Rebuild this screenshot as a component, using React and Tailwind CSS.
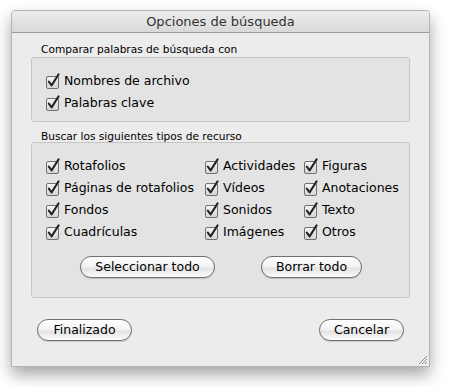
import React from "react";

function Check() {
  return (
    <svg width="15" height="16" viewBox="0 0 15 16" className="shrink-0">
      <defs>
        <linearGradient id="cbg" x1="0" y1="0" x2="0" y2="1">
          <stop offset="0" stopColor="#f6f6f6" />
          <stop offset="1" stopColor="#d4d4d4" />
        </linearGradient>
      </defs>
      <rect x="0.5" y="3.5" width="12" height="12" rx="1.5" fill="url(#cbg)" stroke="#6f6f6f" />
      <path d="M2.8 8.6 L5.6 12.4 L12.6 1.4" fill="none" stroke="#222" strokeWidth="2" strokeLinecap="round" strokeLinejoin="round" />
    </svg>
  );
}

function Item({ label }) {
  return (
    <div className="flex h-[22px] items-center gap-[3px] whitespace-nowrap">
      <Check />
      <span>{label}</span>
    </div>
  );
}

function Btn({ children, w }) {
  return (
    <div
      className={`flex h-[22px] items-center justify-center rounded-full border border-[#707070] bg-[linear-gradient(#ffffff,#f2f2f2_50%,#e2e2e2_55%,#fbfbfb)] text-[12.5px] text-black shadow-[0_1px_1px_rgba(0,0,0,0.15)] ${w}`}
    >
      {children}
    </div>
  );
}

export default function App() {
  return (
    <div className="h-[387px] w-[449px] bg-white pl-[11px] pt-[10px] text-[12.5px] text-black [font-family:'DejaVu_Sans',sans-serif]">
      <div className="relative flex h-[357px] w-[419px] flex-col overflow-hidden rounded-t-[4px] border border-[#b4b4b4] bg-[#ececec] shadow-[0_8px_16px_rgba(0,0,0,0.35)]">
        <div className="flex h-[22px] shrink-0 items-center justify-center border-b border-[#9a9a9a] bg-[linear-gradient(#ececec,#d9d9d9)] text-[13px] text-[#333]">
          Opciones de búsqueda
        </div>
        <div className="flex flex-col px-[19px]">
          <div className="pl-[10px] pt-[9px] text-[10.6px] leading-[14px]">Comparar palabras de búsqueda con</div>
          <div className="mt-[1px] h-[65px] rounded-[3px] border border-[#c6c6c6] bg-[#e3e3e3] pl-[14px] pt-[12px]">
            <Item label="Nombres de archivo" />
            <Item label="Palabras clave" />
          </div>
          <div className="pl-[10px] pt-[8px] text-[10.6px] leading-[12px]">Buscar los siguientes tipos de recurso</div>
          <div className="h-[156px] rounded-[3px] border border-[#c6c6c6] bg-[#e3e3e3] pl-[14px] pt-[12px]">
            <div className="flex">
              <div className="w-[159px]">
                <Item label="Rotafolios" />
                <Item label="Páginas de rotafolios" />
                <Item label="Fondos" />
                <Item label="Cuadrículas" />
              </div>
              <div className="w-[99px]">
                <Item label="Actividades" />
                <Item label="Vídeos" />
                <Item label="Sonidos" />
                <Item label="Imágenes" />
              </div>
              <div>
                <Item label="Figuras" />
                <Item label="Anotaciones" />
                <Item label="Texto" />
                <Item label="Otros" />
              </div>
            </div>
            <div className="mt-[13px] flex pl-[34px]">
              <Btn w="w-[135px]">Seleccionar todo</Btn>
              <div className="w-[46px]" />
              <Btn w="w-[101px]">Borrar todo</Btn>
            </div>
          </div>
        </div>
        <div className="mt-[21px] flex justify-between pl-[25px] pr-[25px]">
          <Btn w="w-[95px]">Finalizado</Btn>
          <Btn w="w-[85px]">Cancelar</Btn>
        </div>
        <svg width="12" height="12" viewBox="0 0 12 12" className="absolute bottom-[1px] right-[1px]">
          <path d="M11 3 L3 11 M11 6 L6 11 M11 9 L9 11" stroke="#8a8a8a" strokeWidth="1" />
        </svg>
      </div>
    </div>
  );
}
